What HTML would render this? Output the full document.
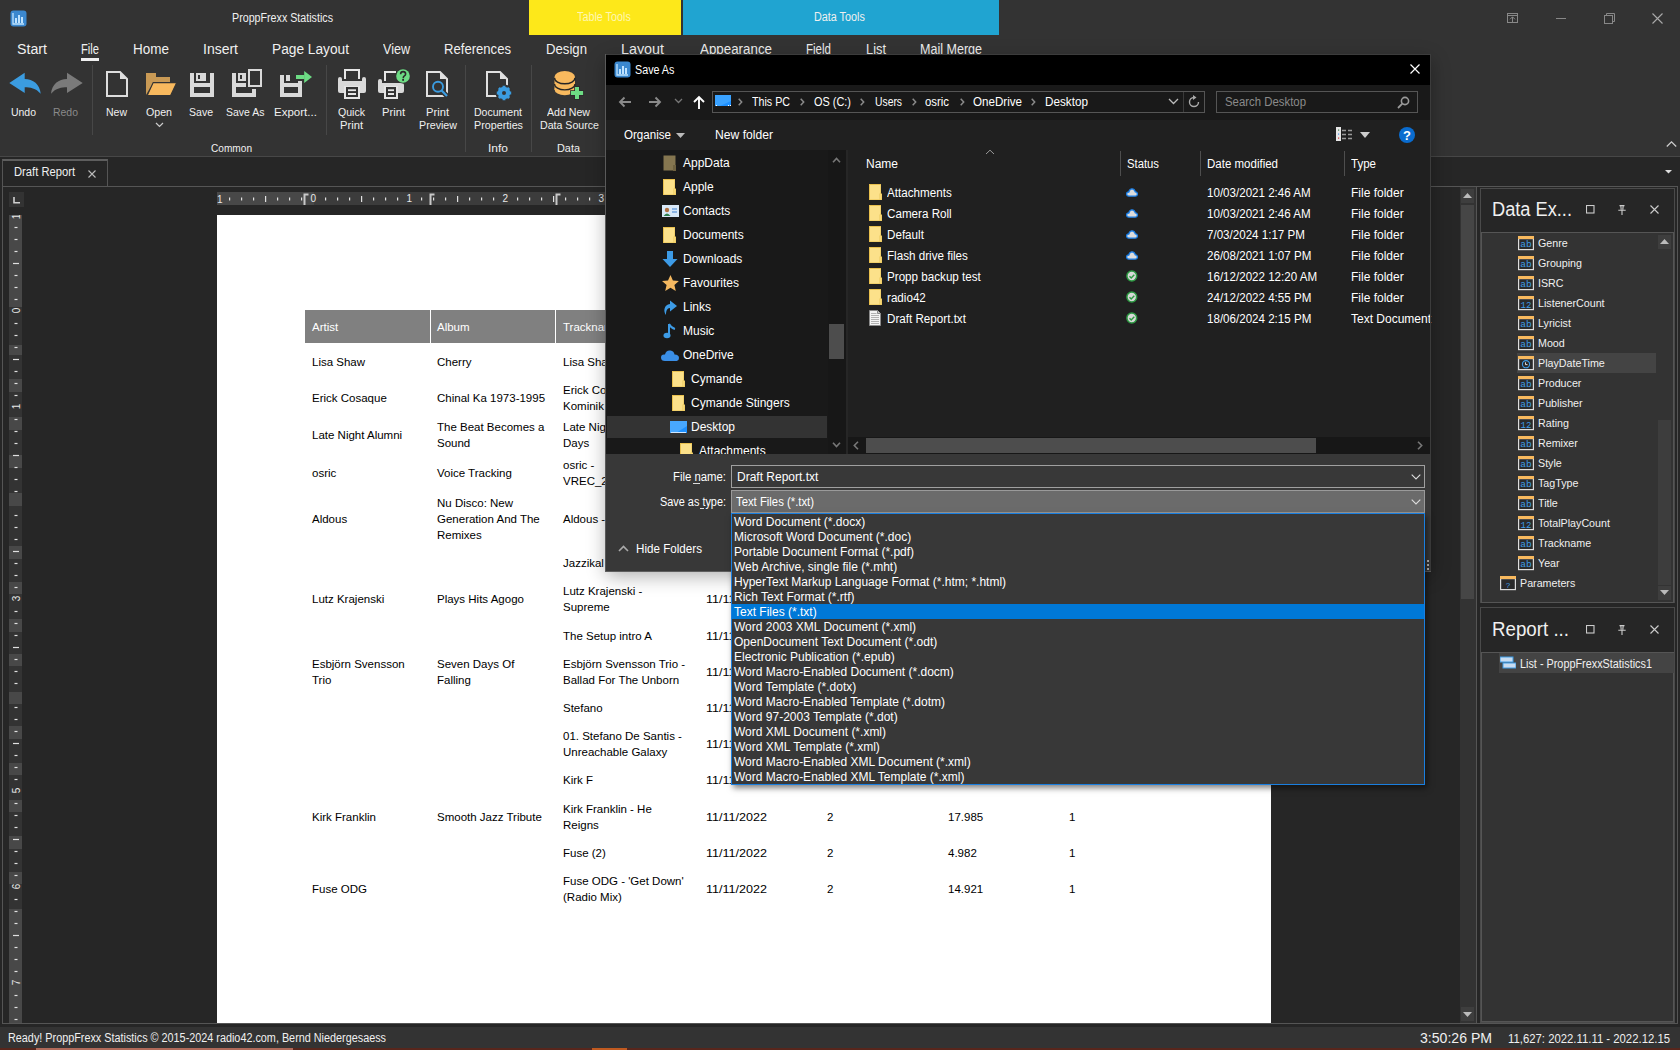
<!DOCTYPE html>
<html><head><meta charset="utf-8"><title>ProppFrexx Statistics</title>
<style>
html,body{margin:0;padding:0;width:1680px;height:1050px;overflow:hidden;background:#333;}
body{position:relative;font-family:"Liberation Sans",sans-serif;}
.a{position:absolute;display:block;}
.t{position:absolute;white-space:nowrap;line-height:1;transform-origin:0 0;font-family:"Liberation Sans",sans-serif;}
</style></head><body>
<div class=a style="left:0px;top:0px;width:1680px;height:156px;background:#333333;"></div>
<svg class=a style="left:10px;top:10px;" width="17" height="17" viewBox="0 0 17 17"><rect x="0.5" y="0.5" width="16" height="16" rx="3" fill="#3b88cf"/><path d="M3 3v11h11" stroke="#bfe3ff" stroke-width="1.3" fill="none"/><rect x="5" y="8" width="2" height="5" fill="#bfe3ff"/><rect x="8" y="5" width="2" height="8" fill="#bfe3ff"/><rect x="11" y="7" width="2" height="6" fill="#bfe3ff"/></svg>
<div class=t style="left:232.00px;top:11.84px;font-size:12px;color:#f0f0f0;transform:scaleX(0.8909);">ProppFrexx Statistics</div>
<div class=a style="left:529px;top:0px;width:152px;height:35px;background:#fde81a;"></div>
<div class=t style="left:577.00px;top:10.84px;font-size:12px;color:#fff7b0;transform:scaleX(0.8995);">Table Tools</div>
<div class=a style="left:683px;top:0px;width:316px;height:35px;background:#20a4d1;"></div>
<div class=t style="left:814.00px;top:10.84px;font-size:12px;color:#f0f0f0;transform:scaleX(0.8995);">Data Tools</div>
<svg class=a style="left:1507px;top:13px;" width="12" height="11" viewBox="0 0 12 11"><rect x="0.5" y="0.5" width="10" height="9" fill="none" stroke="#888"/><path d="M0.5 2.5h10M5.5 10V4M3 6.3l2.5-2.5L8 6.3" stroke="#888" fill="none"/></svg>
<div class=a style="left:1556px;top:18px;width:10px;height:1px;background:#888;"></div>
<svg class=a style="left:1604px;top:13px;" width="11" height="11" viewBox="0 0 11 11"><rect x="0.5" y="2.5" width="8" height="8" fill="none" stroke="#888"/><path d="M2.5 2.5V0.5h8v8h-2" fill="none" stroke="#888"/></svg>
<svg class=a style="left:1652px;top:13px;" width="11" height="11" viewBox="0 0 11 11"><path d="M0.5 0.5l10 10M10.5 0.5l-10 10" stroke="#aaa" stroke-width="1.1"/></svg>
<div class=t style="left:17.00px;top:42.15px;font-size:14px;color:#f0f0f0;transform:scaleX(1.0147);">Start</div>
<div class=t style="left:81.00px;top:42.15px;font-size:14px;color:#f0f0f0;transform:scaleX(0.7979);">File</div>
<div class=t style="left:133.00px;top:42.15px;font-size:14px;color:#f0f0f0;transform:scaleX(0.9640);">Home</div>
<div class=t style="left:203.00px;top:42.15px;font-size:14px;color:#f0f0f0;">Insert</div>
<div class=t style="left:272.00px;top:42.15px;font-size:14px;color:#f0f0f0;transform:scaleX(0.9794);">Page Layout</div>
<div class=t style="left:383.00px;top:42.15px;font-size:14px;color:#f0f0f0;transform:scaleX(0.8973);">View</div>
<div class=t style="left:444.00px;top:42.15px;font-size:14px;color:#f0f0f0;transform:scaleX(0.9358);">References</div>
<div class=t style="left:546.00px;top:42.15px;font-size:14px;color:#f0f0f0;transform:scaleX(0.9408);">Design</div>
<div class=t style="left:621.00px;top:42.15px;font-size:14px;color:#f0f0f0;transform:scaleX(1.0230);">Layout</div>
<div class=t style="left:700.00px;top:42.15px;font-size:14px;color:#f0f0f0;transform:scaleX(0.9536);">Appearance</div>
<div class=t style="left:806.00px;top:42.15px;font-size:14px;color:#f0f0f0;transform:scaleX(0.8239);">Field</div>
<div class=t style="left:866.00px;top:42.15px;font-size:14px;color:#f0f0f0;transform:scaleX(0.9180);">List</div>
<div class=t style="left:920.00px;top:42.15px;font-size:14px;color:#f0f0f0;transform:scaleX(0.8954);">Mail Merge</div>
<div class=a style="left:81px;top:58px;width:18px;height:3px;background:#f0f0f0;"></div>
<div class=a style="left:0px;top:156px;width:1680px;height:1px;background:#474747;"></div>
<svg class=a style="left:1666px;top:140px;" width="11" height="8" viewBox="0 0 11 8"><path d="M0.8 6.5l4.7-4.7 4.7 4.7" stroke="#ccc" stroke-width="1.3" fill="none"/></svg>
<div class=t style="left:11.00px;top:106.67px;font-size:11.5px;color:#f0f0f0;transform:scaleX(0.9093);">Undo</div>
<div class=t style="left:53.00px;top:106.67px;font-size:11.5px;color:#8a8a8a;transform:scaleX(0.9093);">Redo</div>
<div class=t style="left:106.00px;top:106.67px;font-size:11.5px;color:#f0f0f0;transform:scaleX(0.9128);">New</div>
<div class=t style="left:146.00px;top:106.67px;font-size:11.5px;color:#f0f0f0;transform:scaleX(0.9242);">Open</div>
<svg class=a style="left:155px;top:122px;" width="9" height="6" viewBox="0 0 9 6"><path d="M1 1l3.5 3.5L8 1" stroke="#ccc" stroke-width="1.2" fill="none"/></svg>
<div class=t style="left:189.00px;top:106.67px;font-size:11.5px;color:#f0f0f0;transform:scaleX(0.9156);">Save</div>
<div class=t style="left:226.00px;top:106.67px;font-size:11.5px;color:#f0f0f0;transform:scaleX(0.9106);">Save As</div>
<div class=t style="left:274.00px;top:106.67px;font-size:11.5px;color:#f0f0f0;">Export...</div>
<div class=t style="left:338.00px;top:106.67px;font-size:11.5px;color:#f0f0f0;transform:scaleX(0.9185);">Quick</div>
<div class=t style="left:340.00px;top:119.67px;font-size:11.5px;color:#f0f0f0;transform:scaleX(0.9727);">Print</div>
<div class=t style="left:382.00px;top:106.67px;font-size:11.5px;color:#f0f0f0;transform:scaleX(0.9727);">Print</div>
<div class=t style="left:426.00px;top:106.67px;font-size:11.5px;color:#f0f0f0;transform:scaleX(0.9727);">Print</div>
<div class=t style="left:419.00px;top:119.67px;font-size:11.5px;color:#f0f0f0;transform:scaleX(0.9291);">Preview</div>
<div class=t style="left:474.00px;top:106.67px;font-size:11.5px;color:#f0f0f0;transform:scaleX(0.9158);">Document</div>
<div class=t style="left:474.00px;top:119.67px;font-size:11.5px;color:#f0f0f0;transform:scaleX(0.9349);">Properties</div>
<div class=t style="left:547.00px;top:106.67px;font-size:11.5px;color:#f0f0f0;transform:scaleX(0.9215);">Add New</div>
<div class=t style="left:540.00px;top:119.67px;font-size:11.5px;color:#f0f0f0;transform:scaleX(0.9230);">Data Source</div>
<div class=t style="left:211.00px;top:142.57px;font-size:11.5px;color:#f0f0f0;transform:scaleX(0.8789);">Common</div>
<div class=t style="left:488.00px;top:142.57px;font-size:11.5px;color:#f0f0f0;transform:scaleX(1.0427);">Info</div>
<div class=t style="left:557.00px;top:142.57px;font-size:11.5px;color:#f0f0f0;transform:scaleX(0.9468);">Data</div>
<div class=a style="left:92px;top:65px;width:1px;height:70px;background:#474747;"></div>
<div class=a style="left:326px;top:65px;width:1px;height:70px;background:#474747;"></div>
<div class=a style="left:465px;top:65px;width:1px;height:87px;background:#474747;"></div>
<div class=a style="left:531px;top:65px;width:1px;height:87px;background:#474747;"></div>
<svg class=a style="left:9px;top:72px;" width="33" height="23" viewBox="0 0 33 23"><path d="M0.3 10.9L15.7 0.8V6.9C24 6.9 31 12 31.7 21.8 27 16 21 15.2 15.7 15.2V21z" fill="#3b9ce0"/></svg>
<svg class=a style="left:51px;top:72px;" width="33" height="23" viewBox="0 0 33 23"><path d="M31.7 10.9L16 0.8V6.9C7.7 6.9 0.7 12 0 21.8 4.7 16 10.7 15.2 16 15.2V21z" fill="#7a7a7a"/></svg>
<svg class=a style="left:106px;top:71px;" width="22" height="27" viewBox="0 0 22 27"><path d="M1 1h13l7 7v17H1z" fill="none" stroke="#dedede" stroke-width="2"/><path d="M14 1v7h7z" fill="#dedede"/></svg>
<svg class=a style="left:146px;top:73px;" width="32" height="23" viewBox="0 0 32 23"><path d="M0 0h10v4h14v6H0z" fill="#c99a55"/><path d="M0 4h7v6L0 22z" fill="#c99a55"/><path d="M7.2 9.6H30.8L24.6 22.6H1.2z" fill="#f8b95e" stroke="#333" stroke-width="1.1"/></svg>
<svg class=a style="left:190px;top:73px;" width="24" height="24" viewBox="0 0 24 24"><rect width="24" height="24" fill="#d9d9d9"/><rect x="4" y="0" width="2" height="10" fill="#333"/><rect x="16" y="0" width="4" height="10" fill="#333"/><rect x="4" y="8" width="16" height="2" fill="#333"/><rect x="4" y="14" width="16" height="6" fill="#333"/><rect x="8" y="2" width="2" height="4" fill="#333"/></svg>
<svg class=a style="left:232px;top:69px;" width="30" height="28" viewBox="0 0 30 28"><g fill="#d9d9d9"><rect x="0" y="4" width="4" height="24"/><rect x="6" y="4" width="8" height="8"/><rect x="4" y="14" width="10" height="4"/><rect x="0" y="24" width="24" height="4"/><rect x="20" y="20" width="4" height="8"/><rect x="16" y="0" width="14" height="18"/></g><rect x="8" y="6" width="2" height="4" fill="#333"/><rect x="18" y="2" width="10" height="14" fill="#333"/></svg>
<svg class=a style="left:280px;top:71px;" width="33" height="27" viewBox="0 0 33 27"><g fill="#d9d9d9"><rect x="0" y="4" width="4" height="22"/><rect x="6" y="4" width="4" height="6"/><rect x="4" y="12" width="14" height="4"/><rect x="18" y="10" width="4" height="16"/><rect x="0" y="22" width="22" height="4"/></g><rect x="16" y="4" width="8.5" height="4" fill="#6ddc84"/><path d="M24.2 0L32 6 24.2 12z" fill="#6ddc84"/></svg>
<svg class=a style="left:338px;top:69px;" width="28" height="31" viewBox="0 0 28 31"><g fill="#d9d9d9"><rect x="0" y="12" width="28" height="12" rx="2"/><rect x="0" y="8" width="4" height="10" rx="2"/><rect x="24" y="8" width="4" height="10" rx="2"/></g><g fill="#e6e6e6"><rect x="6" y="0" width="16" height="2"/><rect x="6" y="0" width="2" height="10"/><rect x="20" y="0" width="2" height="10"/><rect x="6" y="17" width="16" height="13"/></g><rect x="8" y="18" width="12" height="10" fill="#333"/><rect x="10" y="20.3" width="8" height="1.8" fill="#e6e6e6"/><rect x="10" y="24" width="8" height="2" fill="#e6e6e6"/></svg>
<svg class=a style="left:377px;top:68px;" width="35" height="32" viewBox="0 0 35 32"><g fill="#d9d9d9"><rect x="1" y="15" width="26" height="10" rx="2"/><rect x="1" y="11" width="4" height="10" rx="2"/></g><g fill="#e6e6e6"><rect x="7" y="3" width="12" height="2"/><rect x="7" y="3" width="2" height="10"/><rect x="7" y="18" width="14" height="13"/></g><rect x="9" y="19" width="10" height="10" fill="#333"/><rect x="11" y="21.3" width="6" height="1.8" fill="#e6e6e6"/><rect x="11" y="25" width="6" height="2" fill="#e6e6e6"/><circle cx="26" cy="8" r="7.6" fill="#333"/><circle cx="26" cy="8" r="6.8" fill="#6ddc84"/><path d="M23.6 6.2q0-2.6 2.5-2.6t2.5 2.3q0 1.3-1.2 2-1.1.7-1.1 1.8v.6" stroke="#2a2a2a" stroke-width="1.6" fill="none"/><rect x="25.2" y="11" width="1.8" height="1.8" fill="#2a2a2a"/></svg>
<svg class=a style="left:426px;top:71px;" width="24" height="28" viewBox="0 0 24 28"><path d="M1 1h13l7 7v17H1z" fill="none" stroke="#e0e0e0" stroke-width="2"/><path d="M14 1v7h7z" fill="#e0e0e0"/><circle cx="12" cy="16" r="7.5" fill="#333"/><path d="M15.5 19.5l7 7" stroke="#333" stroke-width="5"/><circle cx="12" cy="15.8" r="5" fill="none" stroke="#3b9ce0" stroke-width="1.9"/><path d="M15.6 19.4l5.4 5.6" stroke="#3b9ce0" stroke-width="2.2"/></svg>
<svg class=a style="left:486px;top:71px;" width="27" height="31" viewBox="0 0 27 31"><path d="M1 1h13l7 7v17H1z" fill="none" stroke="#e0e0e0" stroke-width="2"/><path d="M14 1v7h7z" fill="#e0e0e0"/><circle cx="18" cy="22" r="8.5" fill="#333"/><path d="M18 22L25.20 22.00M18 22L23.09 27.09M18 22L18.00 29.20M18 22L12.91 27.09M18 22L10.80 22.00M18 22L12.91 16.91M18 22L18.00 14.80M18 22L23.09 16.91" stroke="#3b9ce0" stroke-width="2.8" stroke-linecap="butt"/><circle cx="18" cy="22" r="6.2" fill="#3b9ce0"/><circle cx="18" cy="22" r="2" fill="#333"/></svg>
<svg class=a style="left:554px;top:70px;" width="30" height="30" viewBox="0 0 30 30"><g fill="#f8b95e"><ellipse cx="10.75" cy="7" rx="10.25" ry="6"/><rect x="0.5" y="7" width="20.5" height="12.2"/><ellipse cx="10.75" cy="19.2" rx="10.25" ry="6"/></g><path d="M0.5 7.8A10.25 6 0 0 0 21 7.8M0.5 13.9A10.25 6 0 0 0 21 13.9" stroke="#262626" stroke-width="1.4" fill="none"/><path d="M21 16.9h4v4.05h4.1v4h-4.1v4.05h-4v-4.05h-4.1v-4h4.1z" fill="#6ddc84" stroke="#2a2a2a" stroke-width="1.6" paint-order="stroke"/></svg>
<div class=a style="left:0px;top:157px;width:1680px;height:870px;background:#262626;"></div>
<svg class=a style="left:1665px;top:170px;" width="7" height="4" viewBox="0 0 7 4"><path d="M0 0h7L3.5 3.5z" fill="#ddd"/></svg>
<div class=a style="left:2px;top:159px;width:106px;height:28px;background:#262626;box-sizing:border-box;border:1px solid #555;border-bottom:none;border-top:2px solid #5e5e5e;"></div>
<div class=t style="left:14.00px;top:165.84px;font-size:12px;color:#f0f0f0;transform:scaleX(0.9334);">Draft Report</div>
<svg class=a style="left:88px;top:170px;" width="8" height="8" viewBox="0 0 8 8"><path d="M0.5 0.5l7 7M7.5 0.5l-7 7" stroke="#bbb" stroke-width="1.1"/></svg>
<div class=a style="left:2px;top:186px;width:1676px;height:1px;background:#555;"></div>
<div class=a style="left:2px;top:186px;width:1px;height:838px;background:#555;"></div>
<div class=a style="left:2px;top:1023px;width:1676px;height:1px;background:#555;"></div>
<div class=a style="left:1677px;top:186px;width:1px;height:838px;background:#555;"></div>
<div class=a style="left:9px;top:192px;width:15px;height:15px;background:#333333;"></div>
<svg class=a style="left:13px;top:197px;" width="8" height="7" viewBox="0 0 8 7"><path d="M1 0v5.8h6" stroke="#d0d0d0" stroke-width="1.6" fill="none"/></svg>
<div class=a style="left:217px;top:192px;width:1054px;height:13px;background:#3c3c3c;"></div>
<div class=a style="left:217px;top:192px;width:97px;height:13px;background:#484848;"></div>
<svg class=a style="left:217px;top:192px;" width="1054" height="13" viewBox="0 0 1054 13"><rect x="12.0" y="5.5" width="1.2" height="3" fill="#e0e0e0"/><rect x="24.0" y="5.5" width="1.2" height="3" fill="#e0e0e0"/><rect x="36.0" y="5.5" width="1.2" height="3" fill="#e0e0e0"/><rect x="48.0" y="4" width="1.2" height="6" fill="#e0e0e0"/><rect x="60.0" y="5.5" width="1.2" height="3" fill="#e0e0e0"/><rect x="72.0" y="5.5" width="1.2" height="3" fill="#e0e0e0"/><rect x="84.0" y="5.5" width="1.2" height="3" fill="#e0e0e0"/><rect x="108.0" y="5.5" width="1.2" height="3" fill="#e0e0e0"/><rect x="120.0" y="5.5" width="1.2" height="3" fill="#e0e0e0"/><rect x="132.0" y="5.5" width="1.2" height="3" fill="#e0e0e0"/><rect x="144.0" y="4" width="1.2" height="6" fill="#e0e0e0"/><rect x="156.0" y="5.5" width="1.2" height="3" fill="#e0e0e0"/><rect x="168.0" y="5.5" width="1.2" height="3" fill="#e0e0e0"/><rect x="180.0" y="5.5" width="1.2" height="3" fill="#e0e0e0"/><rect x="204.0" y="5.5" width="1.2" height="3" fill="#e0e0e0"/><rect x="216.0" y="5.5" width="1.2" height="3" fill="#e0e0e0"/><rect x="228.0" y="5.5" width="1.2" height="3" fill="#e0e0e0"/><rect x="240.0" y="4" width="1.2" height="6" fill="#e0e0e0"/><rect x="252.0" y="5.5" width="1.2" height="3" fill="#e0e0e0"/><rect x="264.0" y="5.5" width="1.2" height="3" fill="#e0e0e0"/><rect x="276.0" y="5.5" width="1.2" height="3" fill="#e0e0e0"/><rect x="300.0" y="5.5" width="1.2" height="3" fill="#e0e0e0"/><rect x="312.0" y="5.5" width="1.2" height="3" fill="#e0e0e0"/><rect x="324.0" y="5.5" width="1.2" height="3" fill="#e0e0e0"/><rect x="336.0" y="4" width="1.2" height="6" fill="#e0e0e0"/><rect x="348.0" y="5.5" width="1.2" height="3" fill="#e0e0e0"/><rect x="360.0" y="5.5" width="1.2" height="3" fill="#e0e0e0"/><rect x="372.0" y="5.5" width="1.2" height="3" fill="#e0e0e0"/><rect x="396.0" y="5.5" width="1.2" height="3" fill="#e0e0e0"/><rect x="408.0" y="5.5" width="1.2" height="3" fill="#e0e0e0"/><rect x="420.0" y="5.5" width="1.2" height="3" fill="#e0e0e0"/><rect x="432.0" y="4" width="1.2" height="6" fill="#e0e0e0"/><rect x="444.0" y="5.5" width="1.2" height="3" fill="#e0e0e0"/><rect x="456.0" y="5.5" width="1.2" height="3" fill="#e0e0e0"/><rect x="468.0" y="5.5" width="1.2" height="3" fill="#e0e0e0"/><rect x="492.0" y="5.5" width="1.2" height="3" fill="#e0e0e0"/><rect x="504.0" y="5.5" width="1.2" height="3" fill="#e0e0e0"/><rect x="516.0" y="5.5" width="1.2" height="3" fill="#e0e0e0"/><rect x="528.0" y="4" width="1.2" height="6" fill="#e0e0e0"/><rect x="540.0" y="5.5" width="1.2" height="3" fill="#e0e0e0"/><rect x="552.0" y="5.5" width="1.2" height="3" fill="#e0e0e0"/><rect x="564.0" y="5.5" width="1.2" height="3" fill="#e0e0e0"/><rect x="588.0" y="5.5" width="1.2" height="3" fill="#e0e0e0"/><rect x="600.0" y="5.5" width="1.2" height="3" fill="#e0e0e0"/><rect x="612.0" y="5.5" width="1.2" height="3" fill="#e0e0e0"/><rect x="624.0" y="4" width="1.2" height="6" fill="#e0e0e0"/><rect x="636.0" y="5.5" width="1.2" height="3" fill="#e0e0e0"/><rect x="648.0" y="5.5" width="1.2" height="3" fill="#e0e0e0"/><rect x="660.0" y="5.5" width="1.2" height="3" fill="#e0e0e0"/><rect x="684.0" y="5.5" width="1.2" height="3" fill="#e0e0e0"/><rect x="696.0" y="5.5" width="1.2" height="3" fill="#e0e0e0"/><rect x="708.0" y="5.5" width="1.2" height="3" fill="#e0e0e0"/><rect x="720.0" y="4" width="1.2" height="6" fill="#e0e0e0"/><rect x="732.0" y="5.5" width="1.2" height="3" fill="#e0e0e0"/><rect x="744.0" y="5.5" width="1.2" height="3" fill="#e0e0e0"/><rect x="756.0" y="5.5" width="1.2" height="3" fill="#e0e0e0"/><rect x="780.0" y="5.5" width="1.2" height="3" fill="#e0e0e0"/><rect x="792.0" y="5.5" width="1.2" height="3" fill="#e0e0e0"/><rect x="804.0" y="5.5" width="1.2" height="3" fill="#e0e0e0"/><rect x="816.0" y="4" width="1.2" height="6" fill="#e0e0e0"/><rect x="828.0" y="5.5" width="1.2" height="3" fill="#e0e0e0"/><rect x="840.0" y="5.5" width="1.2" height="3" fill="#e0e0e0"/><rect x="852.0" y="5.5" width="1.2" height="3" fill="#e0e0e0"/><rect x="876.0" y="5.5" width="1.2" height="3" fill="#e0e0e0"/><rect x="888.0" y="5.5" width="1.2" height="3" fill="#e0e0e0"/><rect x="900.0" y="5.5" width="1.2" height="3" fill="#e0e0e0"/><rect x="912.0" y="4" width="1.2" height="6" fill="#e0e0e0"/><rect x="924.0" y="5.5" width="1.2" height="3" fill="#e0e0e0"/><rect x="936.0" y="5.5" width="1.2" height="3" fill="#e0e0e0"/><rect x="948.0" y="5.5" width="1.2" height="3" fill="#e0e0e0"/><rect x="972.0" y="5.5" width="1.2" height="3" fill="#e0e0e0"/><rect x="984.0" y="5.5" width="1.2" height="3" fill="#e0e0e0"/><rect x="996.0" y="5.5" width="1.2" height="3" fill="#e0e0e0"/><rect x="1008.0" y="4" width="1.2" height="6" fill="#e0e0e0"/><rect x="1020.0" y="5.5" width="1.2" height="3" fill="#e0e0e0"/><rect x="1032.0" y="5.5" width="1.2" height="3" fill="#e0e0e0"/><rect x="1044.0" y="5.5" width="1.2" height="3" fill="#e0e0e0"/><path d="M87.5 13V2.5h4" stroke="#c8c8c8" stroke-width="2" fill="none"/><path d="M213.5 13V2.5h4" stroke="#c8c8c8" stroke-width="2" fill="none"/><path d="M339.5 13V2.5h4" stroke="#c8c8c8" stroke-width="2" fill="none"/></svg>
<div class=t style="left:217.00px;top:194.54px;font-size:10px;color:#e8e8e8;">1</div>
<div class=t style="left:310.50px;top:194.04px;font-size:10px;color:#e8e8e8;">0</div>
<div class=t style="left:406.50px;top:194.04px;font-size:10px;color:#e8e8e8;">1</div>
<div class=t style="left:502.50px;top:194.04px;font-size:10px;color:#e8e8e8;">2</div>
<div class=t style="left:598.50px;top:194.04px;font-size:10px;color:#e8e8e8;">3</div>
<div class=t style="left:694.50px;top:194.04px;font-size:10px;color:#e8e8e8;">4</div>
<div class=t style="left:790.50px;top:194.04px;font-size:10px;color:#e8e8e8;">5</div>
<div class=t style="left:886.50px;top:194.04px;font-size:10px;color:#e8e8e8;">6</div>
<div class=t style="left:982.50px;top:194.04px;font-size:10px;color:#e8e8e8;">7</div>
<div class=t style="left:1078.50px;top:194.04px;font-size:10px;color:#e8e8e8;">8</div>
<div class=t style="left:1174.50px;top:194.04px;font-size:10px;color:#e8e8e8;">9</div>
<div class=a style="left:9px;top:215px;width:13px;height:808px;background:#333333;"></div>
<div class=a style="left:9px;top:215px;width:13px;height:92px;background:#484848;"></div>
<div class=a style="left:9px;top:345px;width:13px;height:10px;background:#484848;"></div>
<div class=a style="left:9px;top:379px;width:13px;height:13px;background:#484848;"></div>
<div class=a style="left:9px;top:417px;width:13px;height:13px;background:#484848;"></div>
<div class=a style="left:9px;top:455px;width:13px;height:13px;background:#484848;"></div>
<div class=a style="left:9px;top:493px;width:13px;height:13px;background:#484848;"></div>
<div class=a style="left:9px;top:546px;width:13px;height:13px;background:#484848;"></div>
<div class=a style="left:9px;top:582px;width:13px;height:12px;background:#484848;"></div>
<div class=a style="left:9px;top:619px;width:13px;height:13px;background:#484848;"></div>
<div class=a style="left:9px;top:654px;width:13px;height:12px;background:#484848;"></div>
<div class=a style="left:9px;top:692px;width:13px;height:12px;background:#484848;"></div>
<div class=a style="left:9px;top:726px;width:13px;height:13px;background:#484848;"></div>
<div class=a style="left:9px;top:763px;width:13px;height:12px;background:#484848;"></div>
<div class=a style="left:9px;top:800px;width:13px;height:12px;background:#484848;"></div>
<div class=a style="left:9px;top:836px;width:13px;height:13px;background:#484848;"></div>
<div class=a style="left:9px;top:872px;width:13px;height:12px;background:#484848;"></div>
<div class=a style="left:9px;top:909px;width:13px;height:114px;background:#484848;"></div>
<svg class=a style="left:9px;top:215px;" width="13" height="808" viewBox="0 0 13 808"><rect x="5.5" y="11.9" width="3" height="1.2" fill="#e0e0e0"/><rect x="5.5" y="23.9" width="3" height="1.2" fill="#e0e0e0"/><rect x="5.5" y="35.9" width="3" height="1.2" fill="#e0e0e0"/><rect x="4" y="47.9" width="6" height="1.2" fill="#e0e0e0"/><rect x="5.5" y="59.9" width="3" height="1.2" fill="#e0e0e0"/><rect x="5.5" y="71.9" width="3" height="1.2" fill="#e0e0e0"/><rect x="5.5" y="83.9" width="3" height="1.2" fill="#e0e0e0"/><rect x="5.5" y="107.9" width="3" height="1.2" fill="#e0e0e0"/><rect x="5.5" y="119.9" width="3" height="1.2" fill="#e0e0e0"/><rect x="5.5" y="131.9" width="3" height="1.2" fill="#e0e0e0"/><rect x="4" y="143.9" width="6" height="1.2" fill="#e0e0e0"/><rect x="5.5" y="155.9" width="3" height="1.2" fill="#e0e0e0"/><rect x="5.5" y="167.9" width="3" height="1.2" fill="#e0e0e0"/><rect x="5.5" y="179.9" width="3" height="1.2" fill="#e0e0e0"/><rect x="5.5" y="203.9" width="3" height="1.2" fill="#e0e0e0"/><rect x="5.5" y="215.9" width="3" height="1.2" fill="#e0e0e0"/><rect x="5.5" y="227.9" width="3" height="1.2" fill="#e0e0e0"/><rect x="4" y="239.9" width="6" height="1.2" fill="#e0e0e0"/><rect x="5.5" y="251.9" width="3" height="1.2" fill="#e0e0e0"/><rect x="5.5" y="263.9" width="3" height="1.2" fill="#e0e0e0"/><rect x="5.5" y="275.9" width="3" height="1.2" fill="#e0e0e0"/><rect x="5.5" y="299.9" width="3" height="1.2" fill="#e0e0e0"/><rect x="5.5" y="311.9" width="3" height="1.2" fill="#e0e0e0"/><rect x="5.5" y="323.9" width="3" height="1.2" fill="#e0e0e0"/><rect x="4" y="335.9" width="6" height="1.2" fill="#e0e0e0"/><rect x="5.5" y="347.9" width="3" height="1.2" fill="#e0e0e0"/><rect x="5.5" y="359.9" width="3" height="1.2" fill="#e0e0e0"/><rect x="5.5" y="371.9" width="3" height="1.2" fill="#e0e0e0"/><rect x="5.5" y="395.9" width="3" height="1.2" fill="#e0e0e0"/><rect x="5.5" y="407.9" width="3" height="1.2" fill="#e0e0e0"/><rect x="5.5" y="419.9" width="3" height="1.2" fill="#e0e0e0"/><rect x="4" y="431.9" width="6" height="1.2" fill="#e0e0e0"/><rect x="5.5" y="443.9" width="3" height="1.2" fill="#e0e0e0"/><rect x="5.5" y="455.9" width="3" height="1.2" fill="#e0e0e0"/><rect x="5.5" y="467.9" width="3" height="1.2" fill="#e0e0e0"/><rect x="5.5" y="491.9" width="3" height="1.2" fill="#e0e0e0"/><rect x="5.5" y="503.9" width="3" height="1.2" fill="#e0e0e0"/><rect x="5.5" y="515.9" width="3" height="1.2" fill="#e0e0e0"/><rect x="4" y="527.9" width="6" height="1.2" fill="#e0e0e0"/><rect x="5.5" y="539.9" width="3" height="1.2" fill="#e0e0e0"/><rect x="5.5" y="551.9" width="3" height="1.2" fill="#e0e0e0"/><rect x="5.5" y="563.9" width="3" height="1.2" fill="#e0e0e0"/><rect x="5.5" y="587.9" width="3" height="1.2" fill="#e0e0e0"/><rect x="5.5" y="599.9" width="3" height="1.2" fill="#e0e0e0"/><rect x="5.5" y="611.9" width="3" height="1.2" fill="#e0e0e0"/><rect x="4" y="623.9" width="6" height="1.2" fill="#e0e0e0"/><rect x="5.5" y="635.9" width="3" height="1.2" fill="#e0e0e0"/><rect x="5.5" y="647.9" width="3" height="1.2" fill="#e0e0e0"/><rect x="5.5" y="659.9" width="3" height="1.2" fill="#e0e0e0"/><rect x="5.5" y="683.9" width="3" height="1.2" fill="#e0e0e0"/><rect x="5.5" y="695.9" width="3" height="1.2" fill="#e0e0e0"/><rect x="5.5" y="707.9" width="3" height="1.2" fill="#e0e0e0"/><rect x="4" y="719.9" width="6" height="1.2" fill="#e0e0e0"/><rect x="5.5" y="731.9" width="3" height="1.2" fill="#e0e0e0"/><rect x="5.5" y="743.9" width="3" height="1.2" fill="#e0e0e0"/><rect x="5.5" y="755.9" width="3" height="1.2" fill="#e0e0e0"/><rect x="5.5" y="779.9" width="3" height="1.2" fill="#e0e0e0"/><rect x="5.5" y="791.9" width="3" height="1.2" fill="#e0e0e0"/><rect x="5.5" y="803.9" width="3" height="1.2" fill="#e0e0e0"/><text x="0" y="0" transform="translate(10.5 1.5) rotate(-90)" font-size="10" text-anchor="middle" fill="#e8e8e8" font-family="Liberation Sans">1</text><text x="0" y="0" transform="translate(10.5 95.5) rotate(-90)" font-size="10" text-anchor="middle" fill="#e8e8e8" font-family="Liberation Sans">0</text><text x="0" y="0" transform="translate(10.5 191.5) rotate(-90)" font-size="10" text-anchor="middle" fill="#e8e8e8" font-family="Liberation Sans">1</text><text x="0" y="0" transform="translate(10.5 383.5) rotate(-90)" font-size="10" text-anchor="middle" fill="#e8e8e8" font-family="Liberation Sans">3</text><text x="0" y="0" transform="translate(10.5 575.5) rotate(-90)" font-size="10" text-anchor="middle" fill="#e8e8e8" font-family="Liberation Sans">5</text><text x="0" y="0" transform="translate(10.5 671.5) rotate(-90)" font-size="10" text-anchor="middle" fill="#e8e8e8" font-family="Liberation Sans">6</text><text x="0" y="0" transform="translate(10.5 767.5) rotate(-90)" font-size="10" text-anchor="middle" fill="#e8e8e8" font-family="Liberation Sans">7</text></svg>
<div class=a style="left:217px;top:215px;width:1054px;height:808px;background:#ffffff;"></div>
<div class=a style="left:305px;top:310px;width:125px;height:33px;background:#808080;"></div>
<div class=a style="left:431px;top:310px;width:124px;height:33px;background:#808080;"></div>
<div class=a style="left:556px;top:310px;width:60px;height:33px;background:#808080;"></div>
<div class=t style="left:312.00px;top:321.77px;font-size:11.5px;color:#ffffff;">Artist</div>
<div class=t style="left:437.00px;top:321.77px;font-size:11.5px;color:#ffffff;">Album</div>
<div class=t style="left:563.00px;top:321.77px;font-size:11.5px;color:#ffffff;">Trackname</div>
<div class=t style="left:312.00px;top:356.77px;font-size:11.5px;color:#000000;">Lisa Shaw</div>
<div class=t style="left:437.00px;top:356.77px;font-size:11.5px;color:#000000;">Cherry</div>
<div class=t style="left:563.00px;top:356.77px;font-size:11.5px;color:#000000;">Lisa Shaw</div>
<div class=t style="left:312.00px;top:392.77px;font-size:11.5px;color:#000000;">Erick Cosaque</div>
<div class=t style="left:437.00px;top:392.77px;font-size:11.5px;color:#000000;">Chinal Ka 1973-1995</div>
<div class=t style="left:563.00px;top:384.77px;font-size:11.5px;color:#000000;">Erick Cosaque -</div>
<div class=t style="left:563.00px;top:400.77px;font-size:11.5px;color:#000000;">Kominik</div>
<div class=t style="left:312.00px;top:429.77px;font-size:11.5px;color:#000000;">Late Night Alumni</div>
<div class=t style="left:437.00px;top:421.77px;font-size:11.5px;color:#000000;">The Beat Becomes a</div>
<div class=t style="left:437.00px;top:437.77px;font-size:11.5px;color:#000000;">Sound</div>
<div class=t style="left:563.00px;top:421.77px;font-size:11.5px;color:#000000;">Late Night</div>
<div class=t style="left:563.00px;top:437.77px;font-size:11.5px;color:#000000;">Days</div>
<div class=t style="left:312.00px;top:467.77px;font-size:11.5px;color:#000000;">osric</div>
<div class=t style="left:437.00px;top:467.77px;font-size:11.5px;color:#000000;">Voice Tracking</div>
<div class=t style="left:563.00px;top:459.77px;font-size:11.5px;color:#000000;">osric -</div>
<div class=t style="left:563.00px;top:475.77px;font-size:11.5px;color:#000000;">VREC_2022</div>
<div class=t style="left:312.00px;top:514.07px;font-size:11.5px;color:#000000;">Aldous</div>
<div class=t style="left:437.00px;top:498.07px;font-size:11.5px;color:#000000;">Nu Disco: New</div>
<div class=t style="left:437.00px;top:514.07px;font-size:11.5px;color:#000000;">Generation And The</div>
<div class=t style="left:437.00px;top:530.07px;font-size:11.5px;color:#000000;">Remixes</div>
<div class=t style="left:563.00px;top:514.07px;font-size:11.5px;color:#000000;">Aldous -</div>
<div class=t style="left:563.00px;top:558.07px;font-size:11.5px;color:#000000;">Jazzikal</div>
<div class=t style="left:312.00px;top:594.07px;font-size:11.5px;color:#000000;">Lutz Krajenski</div>
<div class=t style="left:437.00px;top:594.07px;font-size:11.5px;color:#000000;">Plays Hits Agogo</div>
<div class=t style="left:563.00px;top:586.07px;font-size:11.5px;color:#000000;">Lutz Krajenski -</div>
<div class=t style="left:563.00px;top:602.07px;font-size:11.5px;color:#000000;">Supreme</div>
<div class=t style="left:706.00px;top:594.07px;font-size:11.5px;color:#000000;transform:scaleX(1.0922);">11/11/2022</div>
<div class=t style="left:827.00px;top:594.07px;font-size:11.5px;color:#000000;">2</div>
<div class=t style="left:1069.00px;top:594.07px;font-size:11.5px;color:#000000;">1</div>
<div class=t style="left:563.00px;top:631.07px;font-size:11.5px;color:#000000;">The Setup intro A</div>
<div class=t style="left:706.00px;top:631.07px;font-size:11.5px;color:#000000;transform:scaleX(1.0922);">11/11/2022</div>
<div class=t style="left:827.00px;top:631.07px;font-size:11.5px;color:#000000;">2</div>
<div class=t style="left:1069.00px;top:631.07px;font-size:11.5px;color:#000000;">1</div>
<div class=t style="left:312.00px;top:659.07px;font-size:11.5px;color:#000000;">Esbjörn Svensson</div>
<div class=t style="left:312.00px;top:675.07px;font-size:11.5px;color:#000000;">Trio</div>
<div class=t style="left:437.00px;top:659.07px;font-size:11.5px;color:#000000;">Seven Days Of</div>
<div class=t style="left:437.00px;top:675.07px;font-size:11.5px;color:#000000;">Falling</div>
<div class=t style="left:563.00px;top:659.07px;font-size:11.5px;color:#000000;">Esbjörn Svensson Trio -</div>
<div class=t style="left:563.00px;top:675.07px;font-size:11.5px;color:#000000;">Ballad For The Unborn</div>
<div class=t style="left:706.00px;top:667.07px;font-size:11.5px;color:#000000;transform:scaleX(1.0922);">11/11/2022</div>
<div class=t style="left:827.00px;top:667.07px;font-size:11.5px;color:#000000;">2</div>
<div class=t style="left:1069.00px;top:667.07px;font-size:11.5px;color:#000000;">1</div>
<div class=t style="left:563.00px;top:703.07px;font-size:11.5px;color:#000000;">Stefano</div>
<div class=t style="left:706.00px;top:703.07px;font-size:11.5px;color:#000000;transform:scaleX(1.0922);">11/11/2022</div>
<div class=t style="left:827.00px;top:703.07px;font-size:11.5px;color:#000000;">2</div>
<div class=t style="left:1069.00px;top:703.07px;font-size:11.5px;color:#000000;">1</div>
<div class=t style="left:563.00px;top:731.07px;font-size:11.5px;color:#000000;">01. Stefano De Santis -</div>
<div class=t style="left:563.00px;top:747.07px;font-size:11.5px;color:#000000;">Unreachable Galaxy</div>
<div class=t style="left:706.00px;top:739.07px;font-size:11.5px;color:#000000;transform:scaleX(1.0922);">11/11/2022</div>
<div class=t style="left:827.00px;top:739.07px;font-size:11.5px;color:#000000;">2</div>
<div class=t style="left:1069.00px;top:739.07px;font-size:11.5px;color:#000000;">1</div>
<div class=t style="left:563.00px;top:775.07px;font-size:11.5px;color:#000000;">Kirk F</div>
<div class=t style="left:706.00px;top:775.07px;font-size:11.5px;color:#000000;transform:scaleX(1.0922);">11/11/2022</div>
<div class=t style="left:827.00px;top:775.07px;font-size:11.5px;color:#000000;">2</div>
<div class=t style="left:1069.00px;top:775.07px;font-size:11.5px;color:#000000;">1</div>
<div class=t style="left:312.00px;top:812.07px;font-size:11.5px;color:#000000;">Kirk Franklin</div>
<div class=t style="left:437.00px;top:812.07px;font-size:11.5px;color:#000000;">Smooth Jazz Tribute</div>
<div class=t style="left:563.00px;top:804.07px;font-size:11.5px;color:#000000;">Kirk Franklin - He</div>
<div class=t style="left:563.00px;top:820.07px;font-size:11.5px;color:#000000;">Reigns</div>
<div class=t style="left:706.00px;top:812.07px;font-size:11.5px;color:#000000;transform:scaleX(1.0922);">11/11/2022</div>
<div class=t style="left:827.00px;top:812.07px;font-size:11.5px;color:#000000;">2</div>
<div class=t style="left:948.00px;top:812.07px;font-size:11.5px;color:#000000;">17.985</div>
<div class=t style="left:1069.00px;top:812.07px;font-size:11.5px;color:#000000;">1</div>
<div class=t style="left:563.00px;top:848.07px;font-size:11.5px;color:#000000;">Fuse (2)</div>
<div class=t style="left:706.00px;top:848.07px;font-size:11.5px;color:#000000;transform:scaleX(1.0922);">11/11/2022</div>
<div class=t style="left:827.00px;top:848.07px;font-size:11.5px;color:#000000;">2</div>
<div class=t style="left:948.00px;top:848.07px;font-size:11.5px;color:#000000;">4.982</div>
<div class=t style="left:1069.00px;top:848.07px;font-size:11.5px;color:#000000;">1</div>
<div class=t style="left:312.00px;top:884.07px;font-size:11.5px;color:#000000;">Fuse ODG</div>
<div class=t style="left:563.00px;top:876.07px;font-size:11.5px;color:#000000;">Fuse ODG - &#x27;Get Down&#x27;</div>
<div class=t style="left:563.00px;top:892.07px;font-size:11.5px;color:#000000;">(Radio Mix)</div>
<div class=t style="left:706.00px;top:884.07px;font-size:11.5px;color:#000000;transform:scaleX(1.0922);">11/11/2022</div>
<div class=t style="left:827.00px;top:884.07px;font-size:11.5px;color:#000000;">2</div>
<div class=t style="left:948.00px;top:884.07px;font-size:11.5px;color:#000000;">14.921</div>
<div class=t style="left:1069.00px;top:884.07px;font-size:11.5px;color:#000000;">1</div>
<div class=a style="left:1460px;top:187px;width:16px;height:836px;background:#333333;"></div>
<div class=a style="left:1461px;top:189px;width:13px;height:14px;background:#3e3e3e;"></div>
<svg class=a style="left:1463px;top:193px;" width="9" height="5" viewBox="0 0 9 5"><path d="M0 5L4.5 0 9 5z" fill="#bbb"/></svg>
<div class=a style="left:1461px;top:205px;width:13px;height:394px;background:#464646;"></div>
<div class=a style="left:1461px;top:1007px;width:13px;height:14px;background:#3e3e3e;"></div>
<svg class=a style="left:1463px;top:1012px;" width="9" height="5" viewBox="0 0 9 5"><path d="M0 0L4.5 5 9 0z" fill="#bbb"/></svg>
<div class=a style="left:1476px;top:186px;width:1px;height:838px;background:#555;"></div>
<div class=a style="left:1477px;top:187px;width:200px;height:836px;background:#262626;"></div>
<div class=a style="left:1480px;top:188px;width:195px;height:415px;background:#262626;box-sizing:border-box;border:1px solid #4a4a4a;"></div>
<div class=t style="left:1492.00px;top:199.07px;font-size:20px;color:#f0f0f0;transform:scaleX(0.9110);">Data Ex...</div>
<svg class=a style="left:1586px;top:205px;" width="9" height="9" viewBox="0 0 9 9"><rect x="0.5" y="0.5" width="7.5" height="7.5" fill="none" stroke="#ccc" stroke-width="1.1"/></svg>
<svg class=a style="left:1618px;top:205px;" width="8" height="10" viewBox="0 0 8 10"><path d="M1.5 0.6h5M2.8 0.6l0.4 4M5.2 0.6l-0.4 4M0.3 5.3h7.4M4 5.5v4.5" stroke="#ccc" stroke-width="1.1" fill="none"/></svg>
<svg class=a style="left:1650px;top:205px;" width="9" height="9" viewBox="0 0 9 9"><path d="M0.5 0.5l8 8M8.5 0.5l-8 8" stroke="#ccc" stroke-width="1.1"/></svg>
<div class=a style="left:1481px;top:232px;width:193px;height:371px;background:#333333;box-sizing:border-box;border:1px solid #555;"></div>
<svg class=a style="left:1518px;top:236px;" width="17" height="15" viewBox="0 0 17 15"><rect x="0.6" y="2.6" width="14.8" height="11" fill="#2a2a2a" stroke="#dcdcdc" stroke-width="1.2"/><rect x="0" y="0" width="16" height="3" fill="#f8b95e"/><text x="8" y="11.3" font-size="9.5" text-anchor="middle" fill="#3d9be6" font-family="Liberation Mono">ab</text></svg>
<div class=t style="left:1538.00px;top:238.07px;font-size:11.5px;color:#f0f0f0;transform:scaleX(0.9300);">Genre</div>
<svg class=a style="left:1518px;top:256px;" width="17" height="15" viewBox="0 0 17 15"><rect x="0.6" y="2.6" width="14.8" height="11" fill="#2a2a2a" stroke="#dcdcdc" stroke-width="1.2"/><rect x="0" y="0" width="16" height="3" fill="#f8b95e"/><text x="8" y="11.3" font-size="9.5" text-anchor="middle" fill="#3d9be6" font-family="Liberation Mono">ab</text></svg>
<div class=t style="left:1538.00px;top:258.07px;font-size:11.5px;color:#f0f0f0;transform:scaleX(0.9300);">Grouping</div>
<svg class=a style="left:1518px;top:276px;" width="17" height="15" viewBox="0 0 17 15"><rect x="0.6" y="2.6" width="14.8" height="11" fill="#2a2a2a" stroke="#dcdcdc" stroke-width="1.2"/><rect x="0" y="0" width="16" height="3" fill="#f8b95e"/><text x="8" y="11.3" font-size="9.5" text-anchor="middle" fill="#3d9be6" font-family="Liberation Mono">ab</text></svg>
<div class=t style="left:1538.00px;top:278.07px;font-size:11.5px;color:#f0f0f0;transform:scaleX(0.9300);">ISRC</div>
<svg class=a style="left:1518px;top:296px;" width="17" height="15" viewBox="0 0 17 15"><rect x="0.6" y="2.6" width="14.8" height="11" fill="#2a2a2a" stroke="#dcdcdc" stroke-width="1.2"/><rect x="0" y="0" width="16" height="3" fill="#f8b95e"/><text x="8" y="11.5" font-size="9" text-anchor="middle" fill="#3d9be6" font-family="Liberation Mono">12</text></svg>
<div class=t style="left:1538.00px;top:298.07px;font-size:11.5px;color:#f0f0f0;transform:scaleX(0.9300);">ListenerCount</div>
<svg class=a style="left:1518px;top:316px;" width="17" height="15" viewBox="0 0 17 15"><rect x="0.6" y="2.6" width="14.8" height="11" fill="#2a2a2a" stroke="#dcdcdc" stroke-width="1.2"/><rect x="0" y="0" width="16" height="3" fill="#f8b95e"/><text x="8" y="11.3" font-size="9.5" text-anchor="middle" fill="#3d9be6" font-family="Liberation Mono">ab</text></svg>
<div class=t style="left:1538.00px;top:318.07px;font-size:11.5px;color:#f0f0f0;transform:scaleX(0.9300);">Lyricist</div>
<svg class=a style="left:1518px;top:336px;" width="17" height="15" viewBox="0 0 17 15"><rect x="0.6" y="2.6" width="14.8" height="11" fill="#2a2a2a" stroke="#dcdcdc" stroke-width="1.2"/><rect x="0" y="0" width="16" height="3" fill="#f8b95e"/><text x="8" y="11.3" font-size="9.5" text-anchor="middle" fill="#3d9be6" font-family="Liberation Mono">ab</text></svg>
<div class=t style="left:1538.00px;top:338.07px;font-size:11.5px;color:#f0f0f0;transform:scaleX(0.9300);">Mood</div>
<div class=a style="left:1517px;top:353px;width:139px;height:20px;background:#444444;"></div>
<svg class=a style="left:1518px;top:356px;" width="17" height="15" viewBox="0 0 17 15"><rect x="0.6" y="2.6" width="14.8" height="11" fill="#2a2a2a" stroke="#dcdcdc" stroke-width="1.2"/><rect x="0" y="0" width="16" height="3" fill="#f8b95e"/><circle cx="8" cy="8.2" r="3.6" fill="none" stroke="#3d9be6" stroke-width="1.1"/><path d="M7.5 6.3v2.3h2" stroke="#ddd" fill="none"/></svg>
<div class=t style="left:1538.00px;top:358.07px;font-size:11.5px;color:#f0f0f0;transform:scaleX(0.9300);">PlayDateTime</div>
<svg class=a style="left:1518px;top:376px;" width="17" height="15" viewBox="0 0 17 15"><rect x="0.6" y="2.6" width="14.8" height="11" fill="#2a2a2a" stroke="#dcdcdc" stroke-width="1.2"/><rect x="0" y="0" width="16" height="3" fill="#f8b95e"/><text x="8" y="11.3" font-size="9.5" text-anchor="middle" fill="#3d9be6" font-family="Liberation Mono">ab</text></svg>
<div class=t style="left:1538.00px;top:378.07px;font-size:11.5px;color:#f0f0f0;transform:scaleX(0.9300);">Producer</div>
<svg class=a style="left:1518px;top:396px;" width="17" height="15" viewBox="0 0 17 15"><rect x="0.6" y="2.6" width="14.8" height="11" fill="#2a2a2a" stroke="#dcdcdc" stroke-width="1.2"/><rect x="0" y="0" width="16" height="3" fill="#f8b95e"/><text x="8" y="11.3" font-size="9.5" text-anchor="middle" fill="#3d9be6" font-family="Liberation Mono">ab</text></svg>
<div class=t style="left:1538.00px;top:398.07px;font-size:11.5px;color:#f0f0f0;transform:scaleX(0.9300);">Publisher</div>
<svg class=a style="left:1518px;top:416px;" width="17" height="15" viewBox="0 0 17 15"><rect x="0.6" y="2.6" width="14.8" height="11" fill="#2a2a2a" stroke="#dcdcdc" stroke-width="1.2"/><rect x="0" y="0" width="16" height="3" fill="#f8b95e"/><text x="8" y="11.5" font-size="9" text-anchor="middle" fill="#3d9be6" font-family="Liberation Mono">12</text></svg>
<div class=t style="left:1538.00px;top:418.07px;font-size:11.5px;color:#f0f0f0;transform:scaleX(0.9300);">Rating</div>
<svg class=a style="left:1518px;top:436px;" width="17" height="15" viewBox="0 0 17 15"><rect x="0.6" y="2.6" width="14.8" height="11" fill="#2a2a2a" stroke="#dcdcdc" stroke-width="1.2"/><rect x="0" y="0" width="16" height="3" fill="#f8b95e"/><text x="8" y="11.3" font-size="9.5" text-anchor="middle" fill="#3d9be6" font-family="Liberation Mono">ab</text></svg>
<div class=t style="left:1538.00px;top:438.07px;font-size:11.5px;color:#f0f0f0;transform:scaleX(0.9300);">Remixer</div>
<svg class=a style="left:1518px;top:456px;" width="17" height="15" viewBox="0 0 17 15"><rect x="0.6" y="2.6" width="14.8" height="11" fill="#2a2a2a" stroke="#dcdcdc" stroke-width="1.2"/><rect x="0" y="0" width="16" height="3" fill="#f8b95e"/><text x="8" y="11.3" font-size="9.5" text-anchor="middle" fill="#3d9be6" font-family="Liberation Mono">ab</text></svg>
<div class=t style="left:1538.00px;top:458.07px;font-size:11.5px;color:#f0f0f0;transform:scaleX(0.9300);">Style</div>
<svg class=a style="left:1518px;top:476px;" width="17" height="15" viewBox="0 0 17 15"><rect x="0.6" y="2.6" width="14.8" height="11" fill="#2a2a2a" stroke="#dcdcdc" stroke-width="1.2"/><rect x="0" y="0" width="16" height="3" fill="#f8b95e"/><text x="8" y="11.3" font-size="9.5" text-anchor="middle" fill="#3d9be6" font-family="Liberation Mono">ab</text></svg>
<div class=t style="left:1538.00px;top:478.07px;font-size:11.5px;color:#f0f0f0;transform:scaleX(0.9300);">TagType</div>
<svg class=a style="left:1518px;top:496px;" width="17" height="15" viewBox="0 0 17 15"><rect x="0.6" y="2.6" width="14.8" height="11" fill="#2a2a2a" stroke="#dcdcdc" stroke-width="1.2"/><rect x="0" y="0" width="16" height="3" fill="#f8b95e"/><text x="8" y="11.3" font-size="9.5" text-anchor="middle" fill="#3d9be6" font-family="Liberation Mono">ab</text></svg>
<div class=t style="left:1538.00px;top:498.07px;font-size:11.5px;color:#f0f0f0;transform:scaleX(0.9300);">Title</div>
<svg class=a style="left:1518px;top:516px;" width="17" height="15" viewBox="0 0 17 15"><rect x="0.6" y="2.6" width="14.8" height="11" fill="#2a2a2a" stroke="#dcdcdc" stroke-width="1.2"/><rect x="0" y="0" width="16" height="3" fill="#f8b95e"/><text x="8" y="11.5" font-size="9" text-anchor="middle" fill="#3d9be6" font-family="Liberation Mono">12</text></svg>
<div class=t style="left:1538.00px;top:518.07px;font-size:11.5px;color:#f0f0f0;transform:scaleX(0.9300);">TotalPlayCount</div>
<svg class=a style="left:1518px;top:536px;" width="17" height="15" viewBox="0 0 17 15"><rect x="0.6" y="2.6" width="14.8" height="11" fill="#2a2a2a" stroke="#dcdcdc" stroke-width="1.2"/><rect x="0" y="0" width="16" height="3" fill="#f8b95e"/><text x="8" y="11.3" font-size="9.5" text-anchor="middle" fill="#3d9be6" font-family="Liberation Mono">ab</text></svg>
<div class=t style="left:1538.00px;top:538.07px;font-size:11.5px;color:#f0f0f0;transform:scaleX(0.9300);">Trackname</div>
<svg class=a style="left:1518px;top:556px;" width="17" height="15" viewBox="0 0 17 15"><rect x="0.6" y="2.6" width="14.8" height="11" fill="#2a2a2a" stroke="#dcdcdc" stroke-width="1.2"/><rect x="0" y="0" width="16" height="3" fill="#f8b95e"/><text x="8" y="11.3" font-size="9.5" text-anchor="middle" fill="#3d9be6" font-family="Liberation Mono">ab</text></svg>
<div class=t style="left:1538.00px;top:558.07px;font-size:11.5px;color:#f0f0f0;transform:scaleX(0.9300);">Year</div>
<svg class=a style="left:1500px;top:576px;" width="17" height="15" viewBox="0 0 17 15"><rect x="0.6" y="2.6" width="14.8" height="11" fill="#2a2a2a" stroke="#dcdcdc" stroke-width="1.2"/><rect x="0" y="0" width="16" height="3" fill="#f8b95e"/><text x="8" y="11.5" font-size="8" text-anchor="middle" fill="#3d9be6" font-family="Liberation Sans">?</text></svg>
<div class=t style="left:1520.00px;top:578.07px;font-size:11.5px;color:#f0f0f0;transform:scaleX(0.9300);">Parameters</div>
<div class=a style="left:1658px;top:235px;width:13px;height:14px;background:#3e3e3e;"></div>
<svg class=a style="left:1660px;top:239px;" width="9" height="5" viewBox="0 0 9 5"><path d="M0 5L4.5 0 9 5z" fill="#bbb"/></svg>
<div class=a style="left:1658px;top:420px;width:13px;height:165px;background:#3d3d3d;"></div>
<div class=a style="left:1658px;top:586px;width:13px;height:14px;background:#3e3e3e;"></div>
<svg class=a style="left:1660px;top:590px;" width="9" height="5" viewBox="0 0 9 5"><path d="M0 0L4.5 5 9 0z" fill="#bbb"/></svg>
<div class=a style="left:1480px;top:607px;width:195px;height:416px;background:#262626;box-sizing:border-box;border:1px solid #4a4a4a;"></div>
<div class=t style="left:1492.00px;top:619.07px;font-size:20px;color:#f0f0f0;transform:scaleX(0.9361);">Report ...</div>
<svg class=a style="left:1586px;top:625px;" width="9" height="9" viewBox="0 0 9 9"><rect x="0.5" y="0.5" width="7.5" height="7.5" fill="none" stroke="#ccc" stroke-width="1.1"/></svg>
<svg class=a style="left:1618px;top:625px;" width="8" height="10" viewBox="0 0 8 10"><path d="M1.5 0.6h5M2.8 0.6l0.4 4M5.2 0.6l-0.4 4M0.3 5.3h7.4M4 5.5v4.5" stroke="#ccc" stroke-width="1.1" fill="none"/></svg>
<svg class=a style="left:1650px;top:625px;" width="9" height="9" viewBox="0 0 9 9"><path d="M0.5 0.5l8 8M8.5 0.5l-8 8" stroke="#ccc" stroke-width="1.1"/></svg>
<div class=a style="left:1481px;top:652px;width:193px;height:370px;background:#333333;box-sizing:border-box;border:1px solid #555;"></div>
<div class=a style="left:1499px;top:653px;width:175px;height:20px;background:#444444;"></div>
<svg class=a style="left:1500px;top:656px;" width="16" height="14" viewBox="0 0 16 14"><rect x="0" y="1" width="13" height="5" fill="#c8dcf0" stroke="#3d9be6"/><rect x="3" y="7" width="13" height="5" fill="#c8dcf0" stroke="#3d9be6"/></svg>
<div class=t style="left:1520.00px;top:657.84px;font-size:12px;color:#f0f0f0;transform:scaleX(0.9038);">List - ProppFrexxStatistics1</div>
<div class=a style="left:0px;top:1027px;width:1680px;height:21px;background:#333333;"></div>
<div class=t style="left:8.00px;top:1031.84px;font-size:12px;color:#f0f0f0;transform:scaleX(0.9020);">Ready! ProppFrexx Statistics © 2015-2024 radio42.com, Bernd Niedergesaess</div>
<div class=t style="left:1420.00px;top:1030.30px;font-size:15px;color:#f0f0f0;transform:scaleX(0.9386);">3:50:26 PM</div>
<div class=t style="left:1508.00px;top:1032.84px;font-size:12px;color:#f0f0f0;transform:scaleX(0.9447);">11,627: 2022.11.11 - 2022.12.15</div>
<div class=a style="left:0px;top:1048px;width:1680px;height:2px;background:#58261c;"></div>
<div class=a style="left:36px;top:1048px;width:257px;height:2px;background:#b06a5a;"></div>
<div class=a style="left:592px;top:1048px;width:35px;height:2px;background:#c05a20;"></div>
<div class=a style="left:606px;top:55px;width:825px;height:516px;box-shadow:0 5px 18px rgba(0,0,0,0.32);"></div>
<div class=a style="left:606px;top:55px;width:825px;height:30px;background:#000000;"></div>
<svg class=a style="left:614px;top:61px;" width="17" height="17" viewBox="0 0 17 17"><rect x="0.5" y="0.5" width="16" height="16" rx="3" fill="#3b88cf"/><path d="M3 3v11h11" stroke="#bfe3ff" stroke-width="1.3" fill="none"/><rect x="5" y="8" width="2" height="5" fill="#bfe3ff"/><rect x="8" y="5" width="2" height="8" fill="#bfe3ff"/><rect x="11" y="7" width="2" height="6" fill="#bfe3ff"/></svg>
<div class=t style="left:635.00px;top:63.84px;font-size:12px;color:#ffffff;transform:scaleX(0.8951);">Save As</div>
<svg class=a style="left:1410px;top:64px;" width="10" height="10" viewBox="0 0 10 10"><path d="M0.5 0.5l9 9M9.5 0.5l-9 9" stroke="#fff" stroke-width="1.2"/></svg>
<div class=a style="left:606px;top:85px;width:825px;height:35px;background:#191919;"></div>
<svg class=a style="left:618px;top:96px;" width="14" height="12" viewBox="0 0 14 12"><path d="M13 6H2M6.5 1.5l-4.5 4.5 4.5 4.5" stroke="#8a8a8a" stroke-width="1.9" fill="none"/></svg>
<svg class=a style="left:648px;top:96px;" width="14" height="12" viewBox="0 0 14 12"><path d="M1 6h11M7.5 1.5l4.5 4.5-4.5 4.5" stroke="#8a8a8a" stroke-width="1.9" fill="none"/></svg>
<svg class=a style="left:674px;top:98px;" width="9" height="6" viewBox="0 0 9 6"><path d="M1 1l3.5 3.5L8 1" stroke="#777" stroke-width="1.3" fill="none"/></svg>
<svg class=a style="left:692px;top:95px;" width="14" height="14" viewBox="0 0 14 14"><path d="M7 14V2M2 7l5-5 5 5" stroke="#fff" stroke-width="1.9" fill="none"/></svg>
<div class=a style="left:712px;top:91px;width:493px;height:22px;background:#191919;box-sizing:border-box;border:1px solid #555;"></div>
<svg class=a style="left:715px;top:95px;" width="17" height="12" viewBox="0 0 17 12"><rect x="0" y="0" width="16" height="11" fill="#1e90ff"/><path d="M0 0h16v6L5 11H0z" fill="#3aa2ff"/><rect x="1" y="10" width="1" height="1" fill="#fff"/><rect x="13" y="10" width="1" height="1" fill="#fff"/><rect x="15" y="10" width="1" height="1" fill="#fff"/></svg>
<svg class=a style="left:738px;top:98px;" width="5" height="8" viewBox="0 0 5 8"><path d="M0.7 0.7l3 3.3-3 3.3" stroke="#8a8a8a" stroke-width="1.5" fill="none"/></svg>
<svg class=a style="left:860px;top:98px;" width="5" height="8" viewBox="0 0 5 8"><path d="M0.7 0.7l3 3.3-3 3.3" stroke="#8a8a8a" stroke-width="1.5" fill="none"/></svg>
<svg class=a style="left:912px;top:98px;" width="5" height="8" viewBox="0 0 5 8"><path d="M0.7 0.7l3 3.3-3 3.3" stroke="#8a8a8a" stroke-width="1.5" fill="none"/></svg>
<svg class=a style="left:960px;top:98px;" width="5" height="8" viewBox="0 0 5 8"><path d="M0.7 0.7l3 3.3-3 3.3" stroke="#8a8a8a" stroke-width="1.5" fill="none"/></svg>
<svg class=a style="left:1031px;top:98px;" width="5" height="8" viewBox="0 0 5 8"><path d="M0.7 0.7l3 3.3-3 3.3" stroke="#8a8a8a" stroke-width="1.5" fill="none"/></svg>
<svg class=a style="left:800px;top:98px;" width="5" height="8" viewBox="0 0 5 8"><path d="M0.7 0.7l3 3.3-3 3.3" stroke="#8a8a8a" stroke-width="1.5" fill="none"/></svg>
<div class=t style="left:752.00px;top:95.84px;font-size:12px;color:#ffffff;transform:scaleX(0.8905);">This PC</div>
<div class=t style="left:814.00px;top:95.84px;font-size:12px;color:#ffffff;transform:scaleX(0.9099);">OS (C:)</div>
<div class=t style="left:875.00px;top:95.84px;font-size:12px;color:#ffffff;transform:scaleX(0.8616);">Users</div>
<div class=t style="left:925.00px;top:95.84px;font-size:12px;color:#ffffff;transform:scaleX(0.9473);">osric</div>
<div class=t style="left:973.00px;top:95.84px;font-size:12px;color:#ffffff;transform:scaleX(0.9668);">OneDrive</div>
<div class=t style="left:1045.00px;top:95.84px;font-size:12px;color:#ffffff;transform:scaleX(0.9768);">Desktop</div>
<svg class=a style="left:1168px;top:98px;" width="11" height="7" viewBox="0 0 11 7"><path d="M1 1l4.5 4.5L10 1" stroke="#bbb" stroke-width="1.3" fill="none"/></svg>
<div class=a style="left:1183px;top:92px;width:1px;height:20px;background:#3a3a3a;"></div>
<svg class=a style="left:1188px;top:95px;" width="12" height="13" viewBox="0 0 12 13"><path d="M10.5 7A4.5 4.5 0 1 1 6 2.5" stroke="#aaa" stroke-width="1.4" fill="none"/><path d="M5 0l3.5 2.5L5 5z" fill="#aaa"/></svg>
<div class=a style="left:1216px;top:91px;width:202px;height:22px;background:#191919;box-sizing:border-box;border:1px solid #555;"></div>
<div class=t style="left:1225.00px;top:95.84px;font-size:12px;color:#8a8a8a;transform:scaleX(0.9487);">Search Desktop</div>
<svg class=a style="left:1397px;top:96px;" width="13" height="13" viewBox="0 0 13 13"><circle cx="8" cy="5" r="3.6" fill="none" stroke="#9a9a9a" stroke-width="1.6"/><path d="M5.3 7.7L1 12" stroke="#9a9a9a" stroke-width="1.8"/></svg>
<div class=a style="left:606px;top:120px;width:825px;height:30px;background:#202020;"></div>
<div class=a style="left:606px;top:150px;width:825px;height:1px;background:#141414;"></div>
<div class=t style="left:624.00px;top:128.84px;font-size:12px;color:#ffffff;transform:scaleX(0.9653);">Organise</div>
<svg class=a style="left:676px;top:133px;" width="9" height="5" viewBox="0 0 9 5"><path d="M0 0h9L4.5 5z" fill="#bbb"/></svg>
<div class=t style="left:715.00px;top:128.84px;font-size:12px;color:#ffffff;transform:scaleX(1.0112);">New folder</div>
<svg class=a style="left:1335px;top:127px;" width="19" height="15" viewBox="0 0 19 15"><rect x="1" y="0" width="5" height="14" fill="#e6e6e6"/><rect x="3" y="2.5" width="1.2" height="1.2" fill="#3a7a4a"/><rect x="3" y="6.5" width="1.2" height="1.2" fill="#4a8fe8"/><rect x="3" y="10.5" width="1.2" height="1.2" fill="#d03030"/><path d="M7 3.5h4M13 3.5h4M7 7.5h4M13 7.5h4M7 11.5h4M13 11.5h4" stroke="#9a9a9a" stroke-width="1.3"/></svg>
<svg class=a style="left:1360px;top:132px;" width="10" height="6" viewBox="0 0 10 6"><path d="M0 0h10L5 6z" fill="#ccc"/></svg>
<svg class=a style="left:1398px;top:126px;" width="18" height="18" viewBox="0 0 18 18"><circle cx="9" cy="9" r="8" fill="#0a6ccf"/><text x="9" y="14" font-size="13" font-weight="bold" text-anchor="middle" fill="#fff" font-family="Liberation Sans">?</text></svg>
<div class=a style="left:606px;top:150px;width:240px;height:304px;background:#191919;"></div>
<div class=a style="left:828px;top:150px;width:18px;height:304px;background:#171717;"></div>
<div class=a style="left:846px;top:150px;width:2px;height:304px;background:#262626;"></div>
<svg class=a style="left:832px;top:157px;" width="9" height="6" viewBox="0 0 9 6"><path d="M1 5.3L4.5 1.5 8 5.3" stroke="#777" stroke-width="1.6" fill="none"/></svg>
<svg class=a style="left:832px;top:442px;" width="9" height="6" viewBox="0 0 9 6"><path d="M1 0.7L4.5 4.5 8 0.7" stroke="#777" stroke-width="1.6" fill="none"/></svg>
<div class=a style="left:829px;top:324px;width:15px;height:35px;background:#4d4d4d;"></div>
<div class=a style="left:607px;top:416px;width:220px;height:22px;background:#333333;"></div>
<svg class=a style="left:663px;top:155px;" width="15" height="17" viewBox="0 0 15 17"><path d="M0.5 0.5h12v15H0.5z" fill="#857650"/><path d="M10 10h3v6h-3z" fill="#6f6240"/></svg>
<div class=t style="left:683.00px;top:156.84px;font-size:12px;color:#ffffff;">AppData</div>
<svg class=a style="left:663px;top:179px;" width="15" height="17" viewBox="0 0 15 17"><rect x="0" y="0" width="12" height="16" fill="#e9c04e"/><rect x="1" y="1" width="10.5" height="14.5" fill="#fce18a"/><rect x="10.5" y="9.5" width="2.5" height="6.5" fill="#eac75a"/><rect x="11" y="10" width="1.5" height="5.5" fill="#f7d877"/></svg>
<div class=t style="left:683.00px;top:180.84px;font-size:12px;color:#ffffff;">Apple</div>
<svg class=a style="left:662px;top:205px;" width="17" height="13" viewBox="0 0 17 13"><rect x="0" y="0" width="17" height="12" fill="#d8e8f8"/><circle cx="5" cy="5" r="2.2" fill="#b07040"/><path d="M1.5 11q3.5-5 7 0z" fill="#2f8050"/><path d="M10 4h5M10 7h5" stroke="#3d7fcf"/></svg>
<div class=t style="left:683.00px;top:204.84px;font-size:12px;color:#ffffff;">Contacts</div>
<svg class=a style="left:663px;top:227px;" width="15" height="17" viewBox="0 0 15 17"><rect x="0" y="0" width="12" height="16" fill="#e9c04e"/><rect x="1" y="1" width="10.5" height="14.5" fill="#fce18a"/><rect x="10.5" y="9.5" width="2.5" height="6.5" fill="#eac75a"/><rect x="11" y="10" width="1.5" height="5.5" fill="#f7d877"/></svg>
<div class=t style="left:683.00px;top:228.84px;font-size:12px;color:#ffffff;">Documents</div>
<svg class=a style="left:662px;top:251px;" width="16" height="17" viewBox="0 0 16 17"><path d="M5 0h6v8h4.5L8 16 0.5 8H5z" fill="#3d9be6"/></svg>
<div class=t style="left:683.00px;top:252.84px;font-size:12px;color:#ffffff;">Downloads</div>
<svg class=a style="left:662px;top:275px;" width="17" height="16" viewBox="0 0 17 16"><path d="M8.5 0l2.4 5.5 6 .5-4.5 4 1.4 6-5.3-3.2L3.2 16l1.4-6L0 6l6-.5z" fill="#f4b860"/></svg>
<div class=t style="left:683.00px;top:276.84px;font-size:12px;color:#ffffff;">Favourites</div>
<svg class=a style="left:663px;top:299px;" width="15" height="16" viewBox="0 0 15 16"><path d="M3 16C0 12 1 6 7 5V1.5L14 7l-7 5.5V9C4 9 3 12 3 16z" fill="#3d9be6"/></svg>
<div class=t style="left:683.00px;top:300.84px;font-size:12px;color:#ffffff;">Links</div>
<svg class=a style="left:663px;top:323px;" width="14" height="16" viewBox="0 0 14 16"><path d="M6 1v10.5" stroke="#3d9be6" stroke-width="2"/><ellipse cx="4" cy="12.5" rx="3.5" ry="2.8" fill="#3d9be6"/><path d="M6 1q2 4 6 5" stroke="#3d9be6" stroke-width="2" fill="none"/></svg>
<div class=t style="left:683.00px;top:324.84px;font-size:12px;color:#ffffff;">Music</div>
<svg class=a style="left:661px;top:350px;" width="18" height="11" viewBox="0 0 18 11"><path d="M4 11q-4 0-4-3.5T4 4.5Q5 0 9.5 0.5 13 1 13.5 4.5 18 4.5 18 8t-4 3z" fill="#3a8ee6"/></svg>
<div class=t style="left:683.00px;top:348.84px;font-size:12px;color:#ffffff;">OneDrive</div>
<svg class=a style="left:672px;top:371px;" width="15" height="17" viewBox="0 0 15 17"><rect x="0" y="0" width="12" height="16" fill="#e9c04e"/><rect x="1" y="1" width="10.5" height="14.5" fill="#fce18a"/><rect x="10.5" y="9.5" width="2.5" height="6.5" fill="#eac75a"/><rect x="11" y="10" width="1.5" height="5.5" fill="#f7d877"/></svg>
<div class=t style="left:691.00px;top:372.84px;font-size:12px;color:#ffffff;">Cymande</div>
<svg class=a style="left:672px;top:395px;" width="15" height="17" viewBox="0 0 15 17"><rect x="0" y="0" width="12" height="16" fill="#e9c04e"/><rect x="1" y="1" width="10.5" height="14.5" fill="#fce18a"/><rect x="10.5" y="9.5" width="2.5" height="6.5" fill="#eac75a"/><rect x="11" y="10" width="1.5" height="5.5" fill="#f7d877"/></svg>
<div class=t style="left:691.00px;top:396.84px;font-size:12px;color:#ffffff;">Cymande Stingers</div>
<svg class=a style="left:670px;top:421px;" width="17" height="13" viewBox="0 0 17 13"><rect x="0" y="0" width="17" height="12" fill="#1e90ff"/><path d="M0 0h17v5L6 12H0z" fill="#48a8ff"/><rect x="1" y="11" width="15" height="1" fill="#cfe6ff"/></svg>
<div class=t style="left:691.00px;top:420.84px;font-size:12px;color:#ffffff;">Desktop</div>
<svg class=a style="left:680px;top:443px;" width="15" height="17" viewBox="0 0 15 17"><rect x="0" y="0" width="12" height="16" fill="#e9c04e"/><rect x="1" y="1" width="10.5" height="14.5" fill="#fce18a"/><rect x="10.5" y="9.5" width="2.5" height="6.5" fill="#eac75a"/><rect x="11" y="10" width="1.5" height="5.5" fill="#f7d877"/></svg>
<div class=t style="left:699.00px;top:444.84px;font-size:12px;color:#ffffff;">Attachments</div>
<div class=a style="left:848px;top:150px;width:583px;height:304px;background:#202020;"></div>
<svg class=a style="left:985px;top:149px;" width="10" height="6" viewBox="0 0 10 6"><path d="M1 5L5 1.2 9 5" stroke="#999" stroke-width="1" fill="none"/></svg>
<div class=t style="left:866.00px;top:157.84px;font-size:12px;color:#ffffff;">Name</div>
<div class=a style="left:1120px;top:151px;width:1px;height:25px;background:#4e4e4e;"></div>
<div class=t style="left:1127.00px;top:157.84px;font-size:12px;color:#ffffff;transform:scaleX(0.9406);">Status</div>
<div class=a style="left:1200px;top:151px;width:1px;height:25px;background:#4e4e4e;"></div>
<div class=t style="left:1207.00px;top:157.84px;font-size:12px;color:#ffffff;transform:scaleX(0.9590);">Date modified</div>
<div class=a style="left:1344px;top:151px;width:1px;height:25px;background:#4e4e4e;"></div>
<div class=t style="left:1351.00px;top:157.84px;font-size:12px;color:#ffffff;transform:scaleX(0.9610);">Type</div>
<svg class=a style="left:869px;top:184px;" width="15" height="17" viewBox="0 0 15 17"><rect x="0" y="0" width="12" height="16" fill="#e9c04e"/><rect x="1" y="1" width="10.5" height="14.5" fill="#fce18a"/><rect x="10.5" y="9.5" width="2.5" height="6.5" fill="#eac75a"/><rect x="11" y="10" width="1.5" height="5.5" fill="#f7d877"/></svg>
<div class=t style="left:887.00px;top:186.84px;font-size:12px;color:#ffffff;transform:scaleX(0.9700);">Attachments</div>
<svg class=a style="left:1126px;top:188px;" width="12" height="9" viewBox="0 0 12 9"><path d="M2.8 8.2q-2.2 0-2.2-2.1T2.8 4Q3.6 0.8 6 0.8T9.3 3.8Q11.4 3.9 11.4 6T9.2 8.2z" fill="#dcdcdc" stroke="#1a7fe8" stroke-width="1.3"/></svg>
<div class=t style="left:1207.00px;top:186.84px;font-size:12px;color:#ffffff;transform:scaleX(0.9650);">10/03/2021 2:46 AM</div>
<div class=t style="left:1351.00px;top:186.84px;font-size:12px;color:#ffffff;">File folder</div>
<svg class=a style="left:869px;top:205px;" width="15" height="17" viewBox="0 0 15 17"><rect x="0" y="0" width="12" height="16" fill="#e9c04e"/><rect x="1" y="1" width="10.5" height="14.5" fill="#fce18a"/><rect x="10.5" y="9.5" width="2.5" height="6.5" fill="#eac75a"/><rect x="11" y="10" width="1.5" height="5.5" fill="#f7d877"/></svg>
<div class=t style="left:887.00px;top:207.84px;font-size:12px;color:#ffffff;transform:scaleX(0.9700);">Camera Roll</div>
<svg class=a style="left:1126px;top:209px;" width="12" height="9" viewBox="0 0 12 9"><path d="M2.8 8.2q-2.2 0-2.2-2.1T2.8 4Q3.6 0.8 6 0.8T9.3 3.8Q11.4 3.9 11.4 6T9.2 8.2z" fill="#dcdcdc" stroke="#1a7fe8" stroke-width="1.3"/></svg>
<div class=t style="left:1207.00px;top:207.84px;font-size:12px;color:#ffffff;transform:scaleX(0.9650);">10/03/2021 2:46 AM</div>
<div class=t style="left:1351.00px;top:207.84px;font-size:12px;color:#ffffff;">File folder</div>
<svg class=a style="left:869px;top:226px;" width="15" height="17" viewBox="0 0 15 17"><rect x="0" y="0" width="12" height="16" fill="#e9c04e"/><rect x="1" y="1" width="10.5" height="14.5" fill="#fce18a"/><rect x="10.5" y="9.5" width="2.5" height="6.5" fill="#eac75a"/><rect x="11" y="10" width="1.5" height="5.5" fill="#f7d877"/></svg>
<div class=t style="left:887.00px;top:228.84px;font-size:12px;color:#ffffff;transform:scaleX(0.9700);">Default</div>
<svg class=a style="left:1126px;top:230px;" width="12" height="9" viewBox="0 0 12 9"><path d="M2.8 8.2q-2.2 0-2.2-2.1T2.8 4Q3.6 0.8 6 0.8T9.3 3.8Q11.4 3.9 11.4 6T9.2 8.2z" fill="#dcdcdc" stroke="#1a7fe8" stroke-width="1.3"/></svg>
<div class=t style="left:1207.00px;top:228.84px;font-size:12px;color:#ffffff;transform:scaleX(0.9650);">7/03/2024 1:17 PM</div>
<div class=t style="left:1351.00px;top:228.84px;font-size:12px;color:#ffffff;">File folder</div>
<svg class=a style="left:869px;top:247px;" width="15" height="17" viewBox="0 0 15 17"><rect x="0" y="0" width="12" height="16" fill="#e9c04e"/><rect x="1" y="1" width="10.5" height="14.5" fill="#fce18a"/><rect x="10.5" y="9.5" width="2.5" height="6.5" fill="#eac75a"/><rect x="11" y="10" width="1.5" height="5.5" fill="#f7d877"/></svg>
<div class=t style="left:887.00px;top:249.84px;font-size:12px;color:#ffffff;transform:scaleX(0.9700);">Flash drive files</div>
<svg class=a style="left:1126px;top:251px;" width="12" height="9" viewBox="0 0 12 9"><path d="M2.8 8.2q-2.2 0-2.2-2.1T2.8 4Q3.6 0.8 6 0.8T9.3 3.8Q11.4 3.9 11.4 6T9.2 8.2z" fill="#dcdcdc" stroke="#1a7fe8" stroke-width="1.3"/></svg>
<div class=t style="left:1207.00px;top:249.84px;font-size:12px;color:#ffffff;transform:scaleX(0.9650);">26/08/2021 1:07 PM</div>
<div class=t style="left:1351.00px;top:249.84px;font-size:12px;color:#ffffff;">File folder</div>
<svg class=a style="left:869px;top:268px;" width="15" height="17" viewBox="0 0 15 17"><rect x="0" y="0" width="12" height="16" fill="#e9c04e"/><rect x="1" y="1" width="10.5" height="14.5" fill="#fce18a"/><rect x="10.5" y="9.5" width="2.5" height="6.5" fill="#eac75a"/><rect x="11" y="10" width="1.5" height="5.5" fill="#f7d877"/></svg>
<div class=t style="left:887.00px;top:270.84px;font-size:12px;color:#ffffff;transform:scaleX(0.9700);">Propp backup test</div>
<svg class=a style="left:1126px;top:270px;" width="12" height="12" viewBox="0 0 12 12"><circle cx="5.8" cy="6" r="4.9" fill="#d8d8d8" stroke="#2c9a42" stroke-width="1.5"/><path d="M3.5 6.2l1.7 1.7 3.1-3.2" stroke="#2c9a42" stroke-width="1.4" fill="none"/></svg>
<div class=t style="left:1207.00px;top:270.84px;font-size:12px;color:#ffffff;transform:scaleX(0.9650);">16/12/2022 12:20 AM</div>
<div class=t style="left:1351.00px;top:270.84px;font-size:12px;color:#ffffff;">File folder</div>
<svg class=a style="left:869px;top:289px;" width="15" height="17" viewBox="0 0 15 17"><rect x="0" y="0" width="12" height="16" fill="#e9c04e"/><rect x="1" y="1" width="10.5" height="14.5" fill="#fce18a"/><rect x="10.5" y="9.5" width="2.5" height="6.5" fill="#eac75a"/><rect x="11" y="10" width="1.5" height="5.5" fill="#f7d877"/></svg>
<div class=t style="left:887.00px;top:291.84px;font-size:12px;color:#ffffff;transform:scaleX(0.9700);">radio42</div>
<svg class=a style="left:1126px;top:291px;" width="12" height="12" viewBox="0 0 12 12"><circle cx="5.8" cy="6" r="4.9" fill="#d8d8d8" stroke="#2c9a42" stroke-width="1.5"/><path d="M3.5 6.2l1.7 1.7 3.1-3.2" stroke="#2c9a42" stroke-width="1.4" fill="none"/></svg>
<div class=t style="left:1207.00px;top:291.84px;font-size:12px;color:#ffffff;transform:scaleX(0.9650);">24/12/2022 4:55 PM</div>
<div class=t style="left:1351.00px;top:291.84px;font-size:12px;color:#ffffff;">File folder</div>
<svg class=a style="left:869px;top:310px;" width="12" height="16" viewBox="0 0 12 16"><path d="M0.5 0.5h8l3 3v12h-11z" fill="#f4f4f4" stroke="#8a8a8a"/><path d="M8.5 0.5v3h3" fill="#ccc" stroke="#8a8a8a"/><path d="M2 3.5h5.5M2 5.5h8M2 7.5h8M2 9.5h8M2 11.5h8M2 13.5h8" stroke="#aaa" stroke-width="0.9"/></svg>
<div class=t style="left:887.00px;top:312.84px;font-size:12px;color:#ffffff;transform:scaleX(0.9700);">Draft Report.txt</div>
<svg class=a style="left:1126px;top:312px;" width="12" height="12" viewBox="0 0 12 12"><circle cx="5.8" cy="6" r="4.9" fill="#d8d8d8" stroke="#2c9a42" stroke-width="1.5"/><path d="M3.5 6.2l1.7 1.7 3.1-3.2" stroke="#2c9a42" stroke-width="1.4" fill="none"/></svg>
<div class=t style="left:1207.00px;top:312.84px;font-size:12px;color:#ffffff;transform:scaleX(0.9650);">18/06/2024 2:15 PM</div>
<div class=t style="left:1351.00px;top:312.84px;font-size:12px;color:#ffffff;">Text Document</div>
<div class=a style="left:1430px;top:150px;width:1px;height:304px;background:#262626;"></div>
<div class=a style="left:848px;top:437px;width:583px;height:17px;background:#171717;"></div>
<div class=a style="left:866px;top:438px;width:450px;height:15px;background:#4d4d4d;"></div>
<svg class=a style="left:853px;top:441px;" width="6" height="9" viewBox="0 0 6 9"><path d="M5 0.7L1.3 4.5 5 8.3" stroke="#777" stroke-width="1.6" fill="none"/></svg>
<svg class=a style="left:1417px;top:441px;" width="6" height="9" viewBox="0 0 6 9"><path d="M1 0.7L4.7 4.5 1 8.3" stroke="#777" stroke-width="1.6" fill="none"/></svg>
<div class=a style="left:606px;top:454px;width:825px;height:117px;background:#383838;"></div>
<div class=t style="left:673.00px;top:470.84px;font-size:12px;color:#ffffff;transform:scaleX(0.9461);">File name:</div>
<div class=a style="left:693px;top:483px;width:7px;height:1px;background:#ddd;"></div>
<div class=t style="left:660.00px;top:495.84px;font-size:12px;color:#ffffff;transform:scaleX(0.9077);">Save as type:</div>
<div class=a style="left:700px;top:508px;width:4px;height:1px;background:#ddd;"></div>
<div class=a style="left:731px;top:465px;width:694px;height:23px;background:#383838;box-sizing:border-box;border:1px solid #a0a0a0;"></div>
<div class=t style="left:737.00px;top:470.84px;font-size:12px;color:#ffffff;">Draft Report.txt</div>
<svg class=a style="left:1411px;top:474px;" width="10" height="6" viewBox="0 0 10 6"><path d="M0.7 0.7L5 5 9.3 0.7" stroke="#ddd" stroke-width="1.1" fill="none"/></svg>
<div class=a style="left:731px;top:490px;width:694px;height:23px;background:#6b6b6b;box-sizing:border-box;border:1px solid #9a9a9a;"></div>
<div class=t style="left:736.00px;top:495.84px;font-size:12px;color:#ffffff;transform:scaleX(0.9434);">Text Files (*.txt)</div>
<svg class=a style="left:1411px;top:499px;" width="10" height="6" viewBox="0 0 10 6"><path d="M0.7 0.7L5 5 9.3 0.7" stroke="#ddd" stroke-width="1.1" fill="none"/></svg>
<svg class=a style="left:618px;top:545px;" width="11" height="7" viewBox="0 0 11 7"><path d="M1 6L5.5 1.5 10 6" stroke="#aaa" stroke-width="1.6" fill="none"/></svg>
<div class=t style="left:636.00px;top:542.84px;font-size:12px;color:#ffffff;transform:scaleX(0.9702);">Hide Folders</div>
<div class=a style="left:1430px;top:54px;width:1px;height:517px;background:#3c3c3c;"></div>
<div class=a style="left:605px;top:54px;width:826px;height:1px;background:#3c3c3c;"></div>
<div class=a style="left:605px;top:54px;width:1px;height:518px;background:#5a5a5a;"></div>
<div class=a style="left:605px;top:571px;width:826px;height:1px;background:#5e5e5e;"></div>
<svg class=a style="left:1424px;top:559px;" width="7" height="11" viewBox="0 0 7 11"><rect x="3" y="1" width="2" height="2" fill="#bbb"/><rect x="3" y="5" width="2" height="2" fill="#bbb"/><rect x="3" y="9" width="2" height="2" fill="#bbb"/></svg>
<div class=a style="left:731px;top:513px;width:694px;height:272px;box-shadow:2px 3px 6px rgba(0,0,0,0.5);"></div>
<div class=a style="left:731px;top:513px;width:694px;height:272px;background:#383838;box-sizing:border-box;border:1px solid #1a7fe0;"></div>
<div class=t style="left:734.00px;top:515.84px;font-size:12px;color:#ffffff;">Word Document (*.docx)</div>
<div class=t style="left:734.00px;top:530.84px;font-size:12px;color:#ffffff;">Microsoft Word Document (*.doc)</div>
<div class=t style="left:734.00px;top:545.84px;font-size:12px;color:#ffffff;">Portable Document Format (*.pdf)</div>
<div class=t style="left:734.00px;top:560.84px;font-size:12px;color:#ffffff;">Web Archive, single file (*.mht)</div>
<div class=t style="left:734.00px;top:575.84px;font-size:12px;color:#ffffff;">HyperText Markup Language Format (*.htm; *.html)</div>
<div class=t style="left:734.00px;top:590.84px;font-size:12px;color:#ffffff;">Rich Text Format (*.rtf)</div>
<div class=a style="left:732px;top:604px;width:692px;height:15px;background:#0078d7;"></div>
<div class=t style="left:734.00px;top:605.84px;font-size:12px;color:#ffffff;">Text Files (*.txt)</div>
<div class=t style="left:734.00px;top:620.84px;font-size:12px;color:#ffffff;">Word 2003 XML Document (*.xml)</div>
<div class=t style="left:734.00px;top:635.84px;font-size:12px;color:#ffffff;">OpenDocument Text Document (*.odt)</div>
<div class=t style="left:734.00px;top:650.84px;font-size:12px;color:#ffffff;">Electronic Publication (*.epub)</div>
<div class=t style="left:734.00px;top:665.84px;font-size:12px;color:#ffffff;">Word Macro-Enabled Document (*.docm)</div>
<div class=t style="left:734.00px;top:680.84px;font-size:12px;color:#ffffff;">Word Template (*.dotx)</div>
<div class=t style="left:734.00px;top:695.84px;font-size:12px;color:#ffffff;">Word Macro-Enabled Template (*.dotm)</div>
<div class=t style="left:734.00px;top:710.84px;font-size:12px;color:#ffffff;">Word 97-2003 Template (*.dot)</div>
<div class=t style="left:734.00px;top:725.84px;font-size:12px;color:#ffffff;">Word XML Document (*.xml)</div>
<div class=t style="left:734.00px;top:740.84px;font-size:12px;color:#ffffff;">Word XML Template (*.xml)</div>
<div class=t style="left:734.00px;top:755.84px;font-size:12px;color:#ffffff;">Word Macro-Enabled XML Document (*.xml)</div>
<div class=t style="left:734.00px;top:770.84px;font-size:12px;color:#ffffff;">Word Macro-Enabled XML Template (*.xml)</div>
</body></html>
